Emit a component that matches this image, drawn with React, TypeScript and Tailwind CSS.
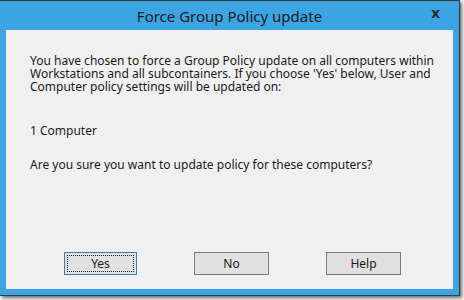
import React from "react";

export default function App() {
  const font = { fontFamily: '"Noto Sans", "Open Sans", sans-serif' };
  return (
    <div className="w-[464px] h-[300px] bg-[#f4f4f4] overflow-hidden" style={font}>
      <div className="w-[460px] h-[296px] bg-[#3ba4e3] border-t border-r border-b border-[#3a3a3a] shadow-[2px_2px_3px_rgba(0,0,0,0.55)] flex flex-col">
        <div className="h-[29px] relative flex items-center justify-center">
          <span className="text-[15px] text-[#1b1b1b] leading-none pt-[1px]">Force Group Policy update</span>
          <span className="absolute right-[19px] top-[4px] text-[15px] font-bold text-[#2b2b2b] leading-none">x</span>
        </div>
        <div className="mx-[6px] mb-[6px] flex-1 bg-[#f0f0f0] flex flex-col">
          <div className="pl-[24px] pt-[24px] text-[12px] leading-[13px] text-[#1a1a1a]">
            <p>You have chosen to force a Group Policy update on all computers within</p>
            <p>Workstations and all subcontainers. If you choose 'Yes' below, User and</p>
            <p>Computer policy settings will be updated on:</p>
            <p className="mt-[31px]">1 Computer</p>
            <p className="mt-[21px]">Are you sure you want to update policy for these computers?</p>
          </div>
          <div className="flex-1" />
          <div className="flex pl-[58px] pb-[14px] text-[12px] text-[#1a1a1a]">
            <button className="w-[73px] h-[23px] bg-[#e1e1e1] border border-[#3c7fb1] p-[2px] flex">
              <span className="flex-1 border border-dotted border-[#222] flex items-center justify-center leading-none">Yes</span>
            </button>
            <button className="ml-[57px] w-[75px] h-[23px] bg-[#e1e1e1] border border-[#7a7a7a] flex items-center justify-center leading-none">No</button>
            <button className="ml-[57px] w-[75px] h-[23px] bg-[#e1e1e1] border border-[#7a7a7a] flex items-center justify-center leading-none">Help</button>
          </div>
        </div>
      </div>
    </div>
  );
}
